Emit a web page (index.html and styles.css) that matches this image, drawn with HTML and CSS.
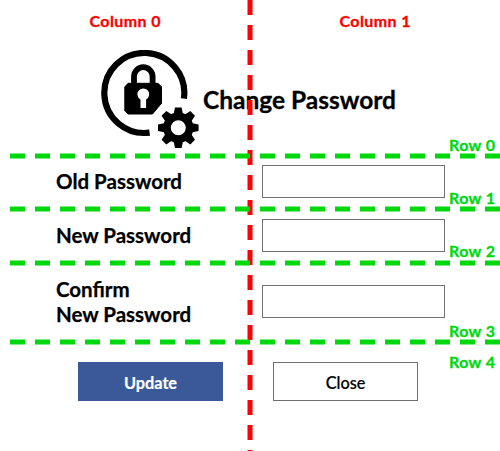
FILE: index.html
```
<!DOCTYPE html>
<html lang="en">
<head>
<meta charset="utf-8">
<title>Change Password</title>
<link rel="stylesheet" href="styles.css">
</head>
<body>
<main class="panel">
  <header class="heading">
    <svg class="emblem" viewBox="0 0 100 100" aria-hidden="true">
      <path d="M49.600 82.600A40 40 0 1 1 83.900 48.600" fill="none" stroke="#000" stroke-width="6.200"/>
      <path d="M34 35V26.500a9.300 9.300 0 0 1 18.600 0V35" fill="none" stroke="#000" stroke-width="5.800"/>
      <path d="M28 33.300H58L61.500 36.800V53.300L52.500 64H28L24.800 60.500V37Z" stroke="#000" stroke-width="1" stroke-linejoin="round"/>
      <path d="M40.500 58V49.500a5.900 5.900 0 1 1 5.600 0V58Z" fill="#fff"/>
      <g transform="translate(78.300 77.700)">
        <g>
          <path id="tooth" d="M-4.800 -13L-3.300 -20.300H3.300L4.800 -13Z"/>
          <use href="#tooth" transform="rotate(45)"/>
          <use href="#tooth" transform="rotate(90)"/>
          <use href="#tooth" transform="rotate(135)"/>
          <use href="#tooth" transform="rotate(180)"/>
          <use href="#tooth" transform="rotate(225)"/>
          <use href="#tooth" transform="rotate(270)"/>
          <use href="#tooth" transform="rotate(315)"/>
        </g>
        <circle r="11.300" fill="none" stroke="#000" stroke-width="7.600"/>
      </g>
    </svg>
    <h1 class="title">Change Password</h1>
  </header>
  <label class="label" for="old">Old Password</label>
  <div class="field"><input class="input" id="old" type="password"></div>
  <label class="label" for="new">New Password</label>
  <div class="field"><input class="input" id="new" type="password"></div>
  <label class="label" for="confirm">Confirm<br>New Password</label>
  <div class="field"><input class="input" id="confirm" type="password"></div>
  <div class="action"><button class="button primary">Update</button></div>
  <div class="action second"><button class="button">Close</button></div>
  <svg class="guides" viewBox="0 0 500 451">
    <path class="column" d="M250 0V451"/>
    <path class="row" d="M10 156H250M260 156H500M10 209H250M260 209H500M10 263H250M260 263H500M10 342H250M260 342H500"/>
    <g class="column-name">
      <text x="89.500" y="27" textLength="71">Column 0</text>
      <text x="339.500" y="27" textLength="71">Column 1</text>
    </g>
    <g class="row-name">
      <text x="449" y="151" textLength="46">Row 0</text>
      <text x="449" y="204" textLength="46">Row 1</text>
      <text x="449" y="257" textLength="46">Row 2</text>
      <text x="449" y="337" textLength="46">Row 3</text>
      <text x="449" y="368" textLength="46">Row 4</text>
    </g>
  </svg>
</main>
</body>
</html>
```
FILE: styles.css
```
* { box-sizing: border-box; }
body { margin: 0; background: #fff; color: #000; font-family: Lato, sans-serif; }
.panel {
  position: relative;
  display: grid;
  grid-template-columns: 250px 250px;
  grid-template-rows: 156px 53px 54px 79px 109px;
  width: 500px;
  height: 451px;
  overflow: hidden;
}
.heading {
  grid-column: 1 / 3;
  display: flex;
  align-items: flex-start;
  padding: 50px 0 0 100px;
}
.emblem { width: 100px; height: 100px; flex: none; }
.title {
  margin: 35px 0 0 3px;
  font-size: 24.500px;
  line-height: 30px;
  font-weight: 700;
  white-space: nowrap;
  -webkit-text-stroke: 0.300px #000;
}
.label {
  align-self: center;
  padding: 0 0 2px 56px;
  font-size: 20.500px;
  line-height: 25px;
  font-weight: 700;
  -webkit-text-stroke: 0.250px #000;
}
.field { display: flex; align-items: center; padding: 0 0 2px 12px; }
.input {
  width: 183px;
  height: 33px;
  padding: 0 8px;
  border: 1px solid #707070;
  border-radius: 0;
  background: #fff;
}
.action { padding: 20px 0 0 78px; }
.action.second { padding-left: 23px; }
.button {
  display: block;
  width: 145px;
  height: 39px;
  padding: 1px 0 0;
  border: 1px solid #707070;
  background: #fff;
  color: #000;
  font: 500 16.300px Lato, sans-serif;
  -webkit-text-stroke: 0.200px currentColor;
}
.button.primary { border-color: #3b5998; background: #3b5998; color: #fff; font-weight: 700; }
.guides { position: absolute; inset: 0; width: 500px; height: 451px; pointer-events: none; }
.column { stroke: #f00; stroke-width: 5; stroke-dasharray: 15 10; }
.row { stroke: #00d80e; stroke-width: 5; stroke-dasharray: 15 10; }
.column-name, .row-name { font: 700 16px Lato, sans-serif; stroke-width: 0.300px; }
.column-name { fill: #f00; stroke: #f00; }
.row-name { fill: #00d80e; stroke: #00d80e; }
```
